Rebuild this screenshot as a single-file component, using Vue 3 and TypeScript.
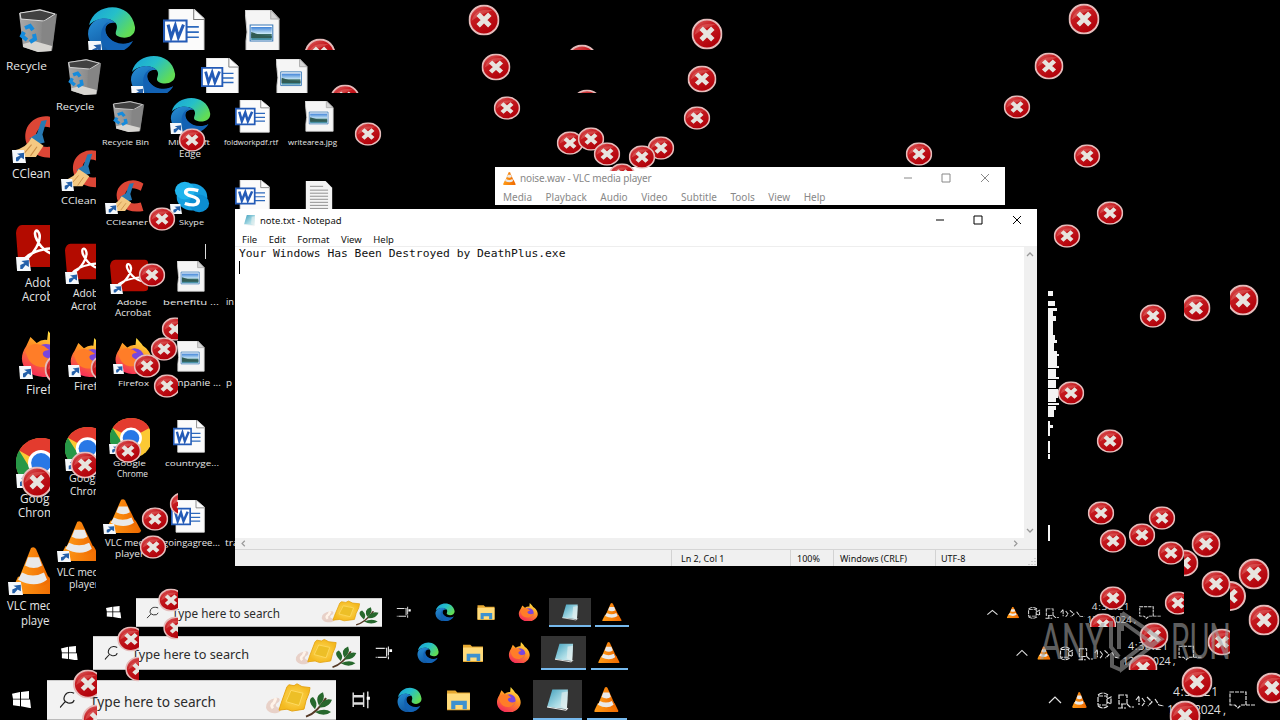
<script setup lang="ts">
interface Clip { id: string; x: number; y: number; w: number; h: number }
interface Item { k: string; x: number; y: number; w: number; h: number; c?: string }
interface Label { t: string; x: number; y: number; w: number; s: number; c?: string }

const right = (n: number): Clip => ({ id: 'r' + n, x: 0, y: 0, w: n, h: 720 })
const bottom = (n: number): Clip => ({ id: 'b' + n, x: 0, y: 0, w: 1280, h: n })
const left = (n: number): Clip => ({ id: 'l' + n, x: n, y: 0, w: 1280 - n, h: 720 })
const clips: Clip[] = [
  ...[50, 96, 97, 139, 150, 178, 1184, 1230].map(right),
  ...[50, 93, 171, 627, 670].map(bottom),
  ...[1184, 1230].map(left),
]

const item = (k: string, x: number, y: number, w: number, h: number, c?: string): Item => ({ k, x, y, w, h, c })
const icons: Item[] = [
  item('bin', 18, 9, 40, 43), item('edge', 87, 6, 49, 48, 'b50'), item('word', 163, 9, 43, 44, 'b50'), item('photo', 245, 10, 35, 42, 'b50'),
  item('cut', 88, 41, 15, 15, 'b50'), item('cut', 165, 43, 0, 0),
  item('bin', 67, 59, 35, 36), item('edge', 130, 55, 46, 43, 'b93'), item('word', 201, 58, 39, 38, 'b93'), item('photo', 276, 59, 32, 36, 'b93'),
  item('cut', 131, 86, 14, 13, 'b93'),
  item('bin', 112, 101, 33, 31), item('edge', 170, 97, 41, 37), item('word', 235, 100, 36, 33), item('photo', 305, 101, 29, 31),
  item('cut', 170, 123, 13, 11),
  item('broom', 12, 116, 50, 45, 'r50'), item('cut', 12, 150, 14, 13, 'r50'),
  item('pdf', 16, 224, 44, 44, 'r50'), item('cut', 16, 257, 15, 14, 'r50'),
  item('fox', 20, 331, 48, 46, 'r50'), item('cut', 19, 366, 14, 13, 'r50'),
  item('chrome', 16, 438, 50, 50, 'r50'), item('cut', 16, 474, 14, 14, 'r50'),
  item('cone', 11, 547, 46, 47, 'r50'), item('cut', 8, 582, 15, 13, 'r50'),
  item('broom', 61, 150, 45, 40, 'r96'), item('cut', 61, 179, 13, 12, 'r96'),
  item('pdf', 65, 243, 40, 37, 'r96'), item('cut', 65, 272, 14, 12, 'r96'),
  item('fox', 69, 338, 43, 39, 'r96'), item('cut', 68, 365, 13, 12, 'r96'),
  item('chrome', 65, 427, 45, 43, 'r96'), item('cut', 65, 459, 13, 12, 'r96'),
  item('cone', 59, 521, 42, 40, 'r96'), item('cut', 57, 551, 14, 11, 'r96'),
  item('broom', 106, 180, 40, 34), item('cut', 105, 203, 13, 11),
  item('skype', 174, 181, 36, 32), item('cut', 170, 204, 12, 10),
  item('word', 235, 180, 36, 32), item('doc', 305, 181, 28, 32),
  item('pdf', 110, 259, 39, 33), item('cut', 110, 284, 13, 10), item('photo', 177, 261, 28, 31),
  item('fox', 114, 338, 38, 36), item('cut', 113, 364, 11, 10), item('photo', 177, 341, 28, 31),
  item('chrome', 110, 418, 42, 40, 'r150'), item('cut', 109, 444, 11, 10), item('word', 173, 420, 33, 33),
  item('cone', 105, 499, 37, 34), item('cut', 103, 524, 13, 10), item('word', 171, 500, 35, 33),
]

type Bubble = [number, number, string?]
const large: Bubble[] = [[320, 54, 'b50'], [582, 60, 'b50'], [484, 20], [707, 34], [1084, 19], [1243, 300, 'l1230'], [1254, 574], [1264, 620], [1272, 688], [1197, 682], [1185, 716], [37, 482, 'r50'], [60, 369, 'r50']]
const middle: Bubble[] = [[345, 98, 'b93'], [587, 103, 'b93'], [496, 67], [702, 79], [1049, 66], [1196, 308, 'l1184'], [1206, 544], [1216, 584], [1184, 563, 'l1184'], [1154, 636, 'b670'], [1222, 642, 'r1230'], [1143, 668, 'b670'], [85, 465, 'r96'], [105, 368, 'r96']]
const small: Bubble[] = [[507, 108], [697, 118], [1017, 107], [570, 143], [591, 139], [607, 154], [622, 175, 'b171'], [661, 148], [642, 157], [919, 154], [1087, 156], [1110, 213], [1067, 236], [1153, 316], [1071, 393], [1110, 441], [1101, 513], [1113, 541], [1142, 535], [1162, 518], [1171, 553], [1178, 603, 'r1184'], [1113, 598], [1103, 625, 'b627'], [175, 329, 'r178'], [164, 349], [147, 366], [167, 386, 'r178'], [128, 451], [155, 519], [183, 504, 'r178'], [153, 547], [192, 140], [368, 134], [152, 275], [162, 219]]
const spread = (list: Bubble[], rx: number, ry: number): Item[] =>
  list.map(([x, y, c]) => item('error', x - rx, y - ry, rx * 2, ry * 2, c))
const errors: Item[] = [
  ...spread([[1230, 596, 'l1230']], 16, 15),
  ...spread(large, 15.5, 15.5), ...spread(middle, 14.5, 13.5), ...spread(small, 13.3, 11.8),
]
const barErrors: Item[] = [
  ...spread([[88, 684, 'r97'], [97, 719, 'r97']], 15, 14.5),
  ...spread([[131, 639, 'r139'], [139, 669, 'r139']], 13.8, 12.5),
  ...spread([[171, 600, 'r178'], [176, 628, 'r178']], 12.8, 11.5),
]

const label = (t: string, x: number, y: number, w: number, s: number, c?: string): Label => ({ t, x, y, w, s, c })
const labels: Label[] = [
  label('Recycle Bin', 6, 70, 62, 11.5, 'r50'), label('Recycle Bin', 56, 110, 58, 9, 'r96'), label('Recycle Bin', 102, 145, 47, 7),
  label('Microsoft', 168, 145, 42, 7), label('Edge', 179, 157, 22, 8.5), label('foldworkpdf.rtf', 224, 145, 54, 7), label('writearea.jpg', 288, 145, 49, 7),
  label('CCleaner', 12, 178, 50, 12, 'r50'), label('CCleaner', 61, 204, 46, 9.5, 'r96'), label('CCleaner', 106, 225, 42, 7.5),
  label('Skype', 179, 225, 25, 8), label('Adobe', 25, 287, 35, 12, 'r50'), label('Acrobat', 22, 301, 42, 12, 'r50'),
  label('Adobe', 73, 297, 31, 10, 'r96'), label('Acrobat', 71, 310, 38, 10, 'r96'),
  label('Adobe', 117, 305, 30, 8), label('Acrobat', 115, 316, 36, 8.5), label('benefitu ...', 163, 305, 56, 8), label('in', 226, 305, 8, 9),
  label('Firefox', 26, 394, 39, 12, 'r50'), label('Firefox', 74, 390, 36, 10, 'r96'), label('Firefox', 118, 386, 31, 8),
  label('companie ...', 163, 386, 58, 9), label('p', 226, 386, 6, 9),
  label('Google', 20, 503, 39, 12, 'r50'), label('Chrome', 18, 517, 43, 12, 'r50'),
  label('Google', 69, 482, 35, 10, 'r96'), label('Chrome', 70, 495, 38, 10, 'r96'),
  label('Google', 113, 466, 33, 8), label('Chrome', 117, 477, 31, 8.5), label('countryge...', 165, 466, 54, 8),
  label('VLC media', 7, 610, 55, 12, 'r50'), label('player', 21, 625, 33, 12, 'r50'),
  label('VLC media', 57, 576, 50, 10, 'r96'), label('player', 69, 588, 30, 10, 'r96'),
  label('VLC media', 105, 546, 47, 8.5), label('player', 115, 557, 29, 9), label('goingagree...', 163, 546, 57, 8.5), label('tra', 225, 546, 14, 9),
]

interface Bar {
  id: string; top: number; h: number; searchX: number; searchW: number; cell: number; trayX: number; trayW: number
  glyph: number; flag: number; textX: number; textW: number; food: number; font: number
}
const bars: Bar[] = [
  { id: 'c', top: 598, h: 29, searchX: 136, searchW: 246, cell: 41.8, trayX: 984, trayW: 181, glyph: 20, flag: 106, textX: 36, textW: 108, food: 62, font: 12 },
  { id: 'b', top: 636, h: 34, searchX: 93, searchW: 267, cell: 45.3, trayX: 1013, trayW: 193, glyph: 22, flag: 61, textX: 39, textW: 117, food: 66, font: 13 },
  { id: 'a', top: 680, h: 40, searchX: 47, searchW: 289, cell: 49.2, trayX: 1045, trayW: 215, glyph: 25, flag: 12, textX: 43, textW: 126, food: 72, font: 14.5 },
]
const tasks = ['view', 'edge', 'folder', 'fox', 'notepad', 'cone']
const gap = (i: number): string => {
  const prev = bars[i - 1]
  return (prev ? bars[i].top - prev.top - prev.h : bars[i].top) + 'px'
}
const trayStart = (b: Bar): string => b.trayX - b.searchX - b.searchW - b.cell * 6 + 'px'

const vlcMenu = ['Media', 'Playback', 'Audio', 'Video', 'Subtitle', 'Tools', 'View', 'Help']
const noteMenu = ['File', 'Edit', 'Format', 'View', 'Help']
const teeth = [[291, 5, 5], [301, 7, 5], [308, 9, 3], [311, 5, 5], [316, 8, 5], [321, 5, 14], [335, 7, 5], [340, 9, 3], [343, 6, 8], [351, 9, 3], [354, 11, 2], [356, 9, 10], [366, 11, 2], [369, 8, 8], [377, 11, 2], [380, 8, 8], [389, 10, 9], [398, 8, 4], [403, 11, 2], [406, 8, 4], [410, 6, 7], [421, 2, 4], [425, 5, 3], [428, 2, 8], [441, 2, 12], [454, 2, 5], [525, 2, 16]]
</script>

<template>
  <main class="desktop">
    <svg class="defs" width="0" height="0">
      <defs>
        <linearGradient id="gBin" x2="1"><stop offset="0" stop-color="#a9a9a9" /><stop offset="1" stop-color="#777" /></linearGradient>
        <linearGradient id="gEdge" x1="0" y1="0" x2="1" y2=".6"><stop offset="0" stop-color="#199fd8" /><stop offset=".5" stop-color="#25bfc9" /><stop offset="1" stop-color="#61dc55" /></linearGradient>
        <linearGradient id="gSea" x2=".7" y2="1"><stop offset="0" stop-color="#278fd6" /><stop offset="1" stop-color="#0b4c98" /></linearGradient>
        <linearGradient id="gSky" x2="0" y2="1"><stop offset="0" stop-color="#3f82d7" /><stop offset=".5" stop-color="#c6e6f5" /><stop offset=".55" stop-color="#37675d" /><stop offset="1" stop-color="#4b98b2" /></linearGradient>
        <linearGradient id="gFox" x1=".8" y1="0" x2=".3" y2="1"><stop offset="0" stop-color="#fff24a" /><stop offset=".45" stop-color="#ff9324" /><stop offset="1" stop-color="#f4285b" /></linearGradient>
        <linearGradient id="gCone" x2="1"><stop offset="0" stop-color="#ff9b17" /><stop offset="1" stop-color="#ef6900" /></linearGradient>
        <linearGradient id="gNote" x2="1" y2="1"><stop offset="0" stop-color="#3e9ebc" /><stop offset=".6" stop-color="#a9dbe5" /><stop offset="1" stop-color="#e9f3f4" /></linearGradient>
        <linearGradient id="gRed" x2=".6" y2="1"><stop offset="0" stop-color="#e07070" /><stop offset=".4" stop-color="#c61b20" /><stop offset="1" stop-color="#b00009" /></linearGradient>
        <radialGradient id="gPasta"><stop offset="0" stop-color="#efaa11" /><stop offset=".55" stop-color="#f8c83b" /><stop offset="1" stop-color="#f4b91e" /></radialGradient>
        <clipPath v-for="c in clips" :id="c.id" :key="c.id"><rect :x="c.x" :y="c.y" :width="c.w" :height="c.h" /></clipPath>
      </defs>
      <symbol id="bin" viewBox="0 0 40 43" preserveAspectRatio="none">
        <path d="M1 4 22 0 39 5 34 42 20 43 5 38Z" fill="url(#gBin)" />
        <path d="M2 4 22 1 37 5 26 12 3 10Z" fill="#414141" stroke="#ddd" />
        <path d="m24 13-1 29 11-1 4-34Z" fill="#858585" />
        <path d="m5 35 11-3 18 5-1 5-13 1-15-5Z" fill="#d7d5d1" />
        <path d="M7 19 12 17l3 4M16 25l1 5-5 3M9 31l-5-4 2-4" fill="none" stroke="#168bdc" stroke-width="4" />
      </symbol>
      <symbol id="edge" viewBox="0 0 48 48" preserveAspectRatio="none">
        <path d="M2 19C7-4 43-6 47 21c1 10-10 13-17 9-5-3 2-7-2-13C22 10 8 12 2 19Z" fill="url(#gEdge)" />
        <path d="M1 28C1 12 20 8 28 17 20 15 15 22 20 30c6 9 17 11 25 5C32 54 3 51 1 28Z" fill="url(#gSea)" />
        <path d="M19 17c-9 8-6 23 5 30 9 0 17-4 21-12-8 5-19 3-25-5-4-6-2-11 2-14Z" fill="#1262b4" />
      </symbol>
      <symbol id="word" viewBox="0 0 42 42" preserveAspectRatio="none">
        <path d="M6 0h24l10 9v32H6Z" fill="#fbfbfb" stroke="#ddd" /><path d="M30 0v10h10" fill="none" stroke="#777" />
        <path d="M22 17h13M22 22h13M22 27h13" stroke="#2c69bd" stroke-width="1.6" />
        <path d="M1 11h22v20H1Z" fill="#fff" stroke="#245bb7" stroke-width="2" />
        <path d="m5 15 3 12 4-11 3 11 5-12" fill="none" stroke="#245bb7" stroke-width="3" />
      </symbol>
      <symbol id="photo" viewBox="0 0 34 42" preserveAspectRatio="none">
        <path d="M0 0h25l8 9v32H1V31l1-9-1-11Z" fill="#f5f5f5" stroke="#ccc" /><path d="M25 0v9h8Z" fill="#d6d6d6" stroke="#aaa" />
        <path d="M5 15h22v16H5Z" fill="#fff" stroke="#3677b5" /><path d="M6 17h20v13H6Z" fill="url(#gSky)" />
        <path d="m6 22 9 3 11 1v2H6Z" fill="#315c54" />
      </symbol>
      <symbol id="doc" viewBox="0 0 34 42" preserveAspectRatio="none">
        <path d="M1 0h24l8 9v33H1Z" fill="#f4f4f4" /><path d="M6 7h16M6 12h22M6 16h22M6 20h22M6 24h22M6 28h22M6 32h22M6 36h22" stroke="#777" />
      </symbol>
      <symbol id="cut" viewBox="0 0 14 14" preserveAspectRatio="none">
        <path d="M0 0h12l2 14H1Z" fill="#f5f8fb" /><path d="M4 12V8l4-2-3-2 7-1v7L9 8l-3 4Z" fill="#2460a9" />
      </symbol>
      <symbol id="broom" viewBox="0 0 46 44" preserveAspectRatio="none">
        <path d="M43 5C35-3 20-1 14 11c-7 17 7 34 29 29l-3-11c-13 4-19-2-18-10 1-9 10-11 18-5Z" fill="#dc4636" />
        <path d="M27 5 32 4 28 18l2 8-8 2-6-6 7-5Z" fill="#2779b3" />
        <path d="m18 21 11 8-7 11H6L1 34q13-3 17-13Z" fill="#f4c982" />
        <path d="m18 28-8 10m13-8-6 9" stroke="#ca8e47" />
      </symbol>
      <symbol id="pdf" viewBox="0 0 44 44" preserveAspectRatio="none">
        <path d="M6 1h33q4 0 4 5v33q0 4-5 4H6q-5-2-4-8L0 9q1-8 6-8Z" fill="#b30b00" />
        <path d="M8 36c10-5 18-20 15-27-3-6-6 0-2 7 5 10 17 18 20 11 2-6-27-1-33 9Z" fill="none" stroke="#fff" stroke-width="2.6" />
      </symbol>
      <symbol id="fox" viewBox="0 0 46 46" preserveAspectRatio="none">
        <path d="M6 15 10 6l6 6q5-4 10-3l1-9c3 4 6 6 8 10l4 3c16 18-1 34-17 33C5 45-4 30 6 15Z" fill="url(#gFox)" />
        <circle cx="25" cy="24" r="11" fill="#7946dd" /><path d="M5 20c5-7 9-9 18-5l5 4c-13 1-3 13 8 7-3 12-22 14-28 2Z" fill="#ff7d28" />
      </symbol>
      <symbol id="chrome" viewBox="0 0 48 48" preserveAspectRatio="none">
        <circle cx="24" cy="24" r="24" fill="#fcc934" /><path d="M24 24 3 12C9 2 18 0 24 0c9 0 17 4 21 12Z" fill="#e33b2e" />
        <path d="M3 12A24 24 0 0 0 24 48L34 30H14Z" fill="#279847" /><circle cx="24" cy="24" r="12.5" fill="#fff" /><circle cx="24" cy="24" r="9.5" fill="#2878e6" />
      </symbol>
      <symbol id="cone" viewBox="0 0 46 46" preserveAspectRatio="none">
        <path d="M7 29h31l7 14q-1 3-4 3H3q-3-1-2-4Z" fill="url(#gCone)" />
        <path d="M20 1q3-2 5 1l14 31q-3 6-16 6-12 0-16-6Z" fill="url(#gCone)" />
        <path d="m17 10 11 0 3 8q-8 5-17 0Zm-6 15q11 6 22 0l3 7q-12 9-29 0Z" fill="#e9e9e9" />
      </symbol>
      <symbol id="skype" viewBox="0 0 40 40" preserveAspectRatio="none">
        <circle cx="20" cy="20" r="17" fill="#159fdf" /><circle cx="12" cy="12" r="11" fill="#20b4ed" /><circle cx="28" cy="28" r="11" fill="#0c8ed2" />
        <path d="M27 12Q13 8 13 14c0 6 14 4 14 11q-1 8-15 3" fill="none" stroke="#fff" stroke-width="4" />
      </symbol>
      <symbol id="folder" viewBox="0 0 24 24"><path d="M1 3h8l2 2h12v17H1Z" fill="#e6a830" /><path d="M1 6h22v15H1Z" fill="#ffdb7b" /><path d="M5 21v-8h15v8h-4v-4H9v4Z" fill="#3d91cf" /></symbol>
      <symbol id="notepad" viewBox="0 0 24 24"><path d="M7 2h15l-1 19-19-2Z" fill="url(#gNote)" /><path d="m16 5 6-1-1 17-6-3Z" fill="#e4eeee" opacity=".65" /><path d="m2 19 18 3 2-2" fill="none" stroke="#eee" /></symbol>
      <symbol id="view" viewBox="0 0 24 24"><path d="M5 5v3h10V5M5 19v-3h10v3M5 9h10v6H5ZM19 4v16" fill="none" stroke="#ddd" stroke-width="1.4" /><path d="M18 9h3v3h-3Z" fill="#fff" /></symbol>
      <symbol id="viewcut" viewBox="0 0 24 24"><path d="M4 7h12v10H4M18 5v14" fill="none" stroke="#ddd" stroke-width="1.3" stroke-dasharray="10 1" /><path d="M19 8h3v3h-3Z" fill="#fff" /></symbol>
      <symbol id="flag" viewBox="0 0 20 18" preserveAspectRatio="none"><path d="m0 3 8-2v7H1Zm9-2 8-1v8H9ZM1 9h7v7l-7-1Zm8 0h9l1 9-10-2Z" fill="#fff" /></symbol>
      <symbol id="lens" viewBox="0 0 16 18" preserveAspectRatio="none"><path d="M14 2Q8-1 5 4q-3 6 3 8 5 1 6-3M5 11l-5 6" fill="none" stroke="#222" stroke-width="1.2" /></symbol>
      <symbol id="error" viewBox="0 0 32 32" preserveAspectRatio="none">
        <circle cx="16" cy="16" r="15" fill="url(#gRed)" stroke="#e5bcbb" stroke-width="2" /><path d="M3 17Q7 3 25 6 13 10 3 17Z" fill="#ee8d88" opacity=".35" />
        <path d="m10 10 12 12m0-12L10 22" stroke="#e7e4df" stroke-width="5" />
      </symbol>
      <symbol id="food" viewBox="0 0 72 40" preserveAspectRatio="none">
        <path d="M12 18c5-1 4 4 2 5-5 3 0 8 5 4-2 10-16 9-17 1q0-8 10-10Z" fill="#e8d1c8" /><path d="m12 18-2 5q-4 3-1 6" fill="none" stroke="#fff3e9" stroke-width="3" />
        <path d="m25 4 5 1 3-2 5 3 8 1-1 6-3 8-2 9-6 1-6 1-5-2-8 1 2-7 3-9 3-9Z" fill="url(#gPasta)" stroke="#e4a414" /><path d="m27 10 12 3-4 13-13-4Z" fill="#edbf27" stroke="#ffdb63" />
        <path d="M42 38Q53 34 62 18" fill="none" stroke="#563926" stroke-width="2" /><path d="M51 30Q42 20 49 17q6 7 2 13Zm4-4q-5-10 4-14 3 8-4 14Zm0 2q5-11 13-8-3 9-13 8Zm-4 5q10-5 16 0-7 6-16 0Z" fill="#27682d" />
      </symbol>
    </svg>

    <svg class="layer" viewBox="0 0 1280 720">
      <g v-for="(n, i) in icons" :key="i" :clip-path="n.c ? `url(#${n.c})` : undefined"><use :href="'#' + n.k" :x="n.x" :y="n.y" :width="n.w" :height="n.h" /></g>
      <g class="labels">
        <g v-for="(n, i) in labels" :key="i" :clip-path="n.c ? `url(#${n.c})` : undefined">
          <text :x="n.x" :y="n.y" :font-size="n.s" :textLength="n.w" lengthAdjust="spacingAndGlyphs">{{ n.t }}</text>
        </g>
      </g>
      <rect v-for="t in teeth" :key="t[0]" x="1048" :y="t[0]" :width="t[1]" :height="t[2]" fill="#f4f4f4" />
      <rect x="205" y="244" width="1" height="15" fill="#ddd" />
    </svg>

    <div class="bars">
      <div v-for="(b, i) in bars" :key="b.id" class="bar" :style="{ height: b.h + 'px', marginTop: gap(i) }">
        <div class="start" :style="{ width: b.searchX + 'px', paddingLeft: b.flag + 'px' }"><svg :width="b.glyph * 0.8" :height="b.h * 0.43"><use href="#flag" width="100%" height="100%" /></svg></div>
        <div class="search" :style="{ width: b.searchW + 'px' }">
          <svg class="fill">
            <use href="#lens" :x="b.textX * 0.3" :y="b.h * 0.26" :width="b.glyph * 0.65" :height="b.h * 0.43" />
            <text :x="b.textX" :y="b.h * 0.66" :font-size="b.font" :textLength="b.textW" lengthAdjust="spacingAndGlyphs">Type here to search</text>
            <use href="#food" :x="b.searchW - b.food" y="0" :width="b.food" :height="b.h * 0.94" />
          </svg>
        </div>
        <div v-for="t in tasks" :key="t" class="task" :class="t" :style="{ width: b.cell + 'px' }">
          <svg :width="b.glyph" :height="b.h * 0.64"><use :href="'#' + (t === 'view' && b.id !== 'a' ? 'viewcut' : t)" width="100%" height="100%" /></svg>
        </div>
        <svg class="tray" :style="{ width: b.trayW + 'px', marginLeft: trayStart(b) }" viewBox="0 0 215 40" preserveAspectRatio="none">
          <path d="m4 23 6-6 6 6" />
          <use href="#cone" x="27" y="12" width="15" height="16" />
          <path d="M53 15q5-4 10 0M53 26q5 4 10 0M53 16h9v9h-9Zm9 3 4-2v7l-4-2M74 15h8v9h-8Zm3 9v4m-4 0h8M82 24l3 3h4m2-7 3-4v9m3-7 3 4-3 4m5-9 5 5-4 4m7-7 4 6 5 1" stroke-dasharray="5 1" />
          <text x="128" y="16" textLength="45">4:38:21</text>
          <text x="122" y="34" textLength="59">12/7/2024 ,</text>
          <path d="M185 12h16v13h-5l-3 3-3-3h-5ZM201 25h10" stroke-dasharray="4 1" />
        </svg>
      </div>
    </div>

    <section class="win vlc">
      <header class="title">
        <svg class="app"><use href="#cone" width="13" height="13" /></svg>
        <span>noise.wav - VLC media player</span>
        <svg class="controls" viewBox="0 0 100 18"><path d="M3 9h8m30-4h8v8h-8Zm39 0 8 8m0-8-8 8" /></svg>
      </header>
      <nav><span v-for="m in vlcMenu" :key="m">{{ m }}</span></nav>
    </section>

    <section class="win note">
      <header class="title">
        <svg class="app" viewBox="0 0 24 24"><use href="#notepad" width="24" height="24" /></svg>
        <span>note.txt - Notepad</span>
        <svg class="controls" viewBox="0 0 100 18"><path d="M3 9h8m30-4h8v8h-8Zm39 0 8 8m0-8-8 8" /></svg>
      </header>
      <nav><span v-for="m in noteMenu" :key="m">{{ m }}</span></nav>
      <div class="editor">
        <div class="text">Your Windows Has Been Destroyed by DeathPlus.exe<i class="caret"></i></div>
        <div class="vscroll"><svg viewBox="0 0 13 9"><path d="m3 6 3-3 3 3" /></svg><svg viewBox="0 0 13 9"><path d="m3 3 3 3 3-3" /></svg></div>
      </div>
      <div class="hscroll"><svg viewBox="0 0 13 12"><path d="M9 3 6 6l3 3" /></svg><svg viewBox="0 0 13 12"><path d="m4 3 3 3-3 3" /></svg></div>
      <footer>
        <span class="fill-cell"></span><span class="line">Ln 2, Col 1</span><span class="zoom">100%</span><span class="ending">Windows (CRLF)</span><span class="coding">UTF-8</span>
        <svg viewBox="0 0 10 10"><path d="M8 2v1M5 5v1M8 5v1M2 8v1M5 8v1M8 8v1" /></svg>
      </footer>
    </section>

    <svg class="layer" viewBox="0 0 1280 720">
      <g v-for="(n, i) in [...errors, ...barErrors]" :key="i" :clip-path="n.c ? `url(#${n.c})` : undefined"><use href="#error" :x="n.x" :y="n.y" :width="n.w" :height="n.h" /></g>
      <g class="mark">
        <text x="1040" y="659" textLength="65" lengthAdjust="spacingAndGlyphs">ANY</text>
        <path d="M1111 621v26l8 10M1119 621v28M1122 613v18M1122 613l39 26-14 8M1161 639l-39 30v-7l27-21-25-18M1112 653v13l9 4" />
        <text x="1171" y="659" textLength="60" lengthAdjust="spacingAndGlyphs">RUN</text>
      </g>
    </svg>
  </main>
</template>

<style>
html, body { margin: 0; background: #000; }
</style>

<style scoped>
.desktop { position: relative; width: 1280px; height: 720px; overflow: hidden; background: #000; font-family: "Noto Sans", "Open Sans", sans-serif; color: #111; }
.defs { position: absolute; }
.layer { position: absolute; inset: 0; width: 1280px; height: 720px; }
.labels { fill: #e6e6e6; font-family: "Open Sans", sans-serif; }
.bars { position: absolute; inset: 0; display: flex; flex-direction: column; }
.bar { display: flex; flex: none; align-items: stretch; }
.start { box-sizing: border-box; display: flex; align-items: center; flex: none; }
.search { background: #f2f2f2; flex: none; box-sizing: border-box; border-top: 1px solid #ccc; border-bottom: 1px solid #bbb; overflow: hidden; }
.fill { width: 100%; height: 100%; display: block; overflow: visible; }
.search text { fill: #2c2c2c; }
.task { display: flex; align-items: center; justify-content: center; flex: none; box-sizing: border-box; border-bottom: 2px solid transparent; padding-top: 1px; position: relative; }
.notepad { background: #343434; background-clip: padding-box; border-color: #76b9ed; }
.cone::after { content: ""; position: absolute; left: 10%; right: 8%; bottom: -2px; height: 2px; background: #76b9ed; }
.tray { height: 100%; flex: none; overflow: visible; }
.tray path { fill: none; stroke: #e2e2e2; stroke-width: 1.2; }
.tray text { fill: #ddd; font-size: 12px; font-family: "Open Sans", sans-serif; }
.win { position: absolute; box-sizing: border-box; background: #fff; display: flex; flex-direction: column; }
.vlc { left: 495px; top: 167px; width: 510px; height: 38px; color: #888; }
.note { left: 235px; top: 209px; width: 802px; height: 357px; }
.title { height: 22px; display: flex; align-items: center; flex: none; font-size: 10px; padding-left: 8px; gap: 4px; }
.app { width: 13px; height: 13px; flex: none; }
.controls { width: 100px; height: 18px; margin-left: auto; }
.controls path { fill: none; stroke: #000; stroke-width: 1; }
.vlc .controls path { stroke: #888; }
.vlc .controls { margin-right: 4px; }
.note .controls { margin-right: 4px; }
.vlc .title span { letter-spacing: -.16px; }
.note .title span { font-size: 9.5px; }
nav { display: flex; align-items: center; font-size: 10px; height: 16px; flex: none; padding-left: 8px; gap: 13.5px; }
.note nav { height: 14px; padding-left: 7px; gap: 11.5px; font-size: 9.5px; border-bottom: 1px solid #eee; padding-top: 1px; }
.editor { flex: 1; display: flex; min-height: 0; }
.text { flex: 1; font: 11.3px/14px "DejaVu Sans Mono", monospace; color: #111; padding: 0 4px; white-space: nowrap; }
.caret { display: block; width: 1px; height: 13px; background: #000; }
.vscroll { width: 13px; background: #f0f0f0; display: flex; flex-direction: column; justify-content: space-between; padding: 3px 0; }
.vscroll svg { width: 13px; height: 9px; }
.hscroll { height: 11px; background: #f0f0f0; display: flex; justify-content: space-between; padding: 0 14px 0 1px; }
.hscroll svg { width: 13px; height: 11px; }
.vscroll path, .hscroll path { fill: none; stroke: #999; stroke-width: 1.3; }
footer { height: 17px; background: #f0f0f0; border-top: 1px solid #d5d5d5; display: flex; font-size: 9px; line-height: 17px; position: relative; box-sizing: border-box; }
footer span { box-sizing: border-box; white-space: nowrap; border-left: 1px solid #d3d3d3; padding-left: 6px; }
footer .fill-cell { width: 436px; border: 0; }
footer .line { width: 119px; padding-left: 9px; }
footer .zoom { width: 43px; }
footer .ending { width: 102px; }
footer .coding { flex: 1; padding-left: 5px; }
footer svg { width: 10px; height: 10px; align-self: flex-end; }
footer path { stroke: #aaa; fill: none; }
.mark { opacity: .58; }
.mark text { fill: #a2a2a2; font: 50px Roboto, sans-serif; }
.mark path { fill: none; stroke: #a2a2a2; stroke-width: 4; }
</style>
